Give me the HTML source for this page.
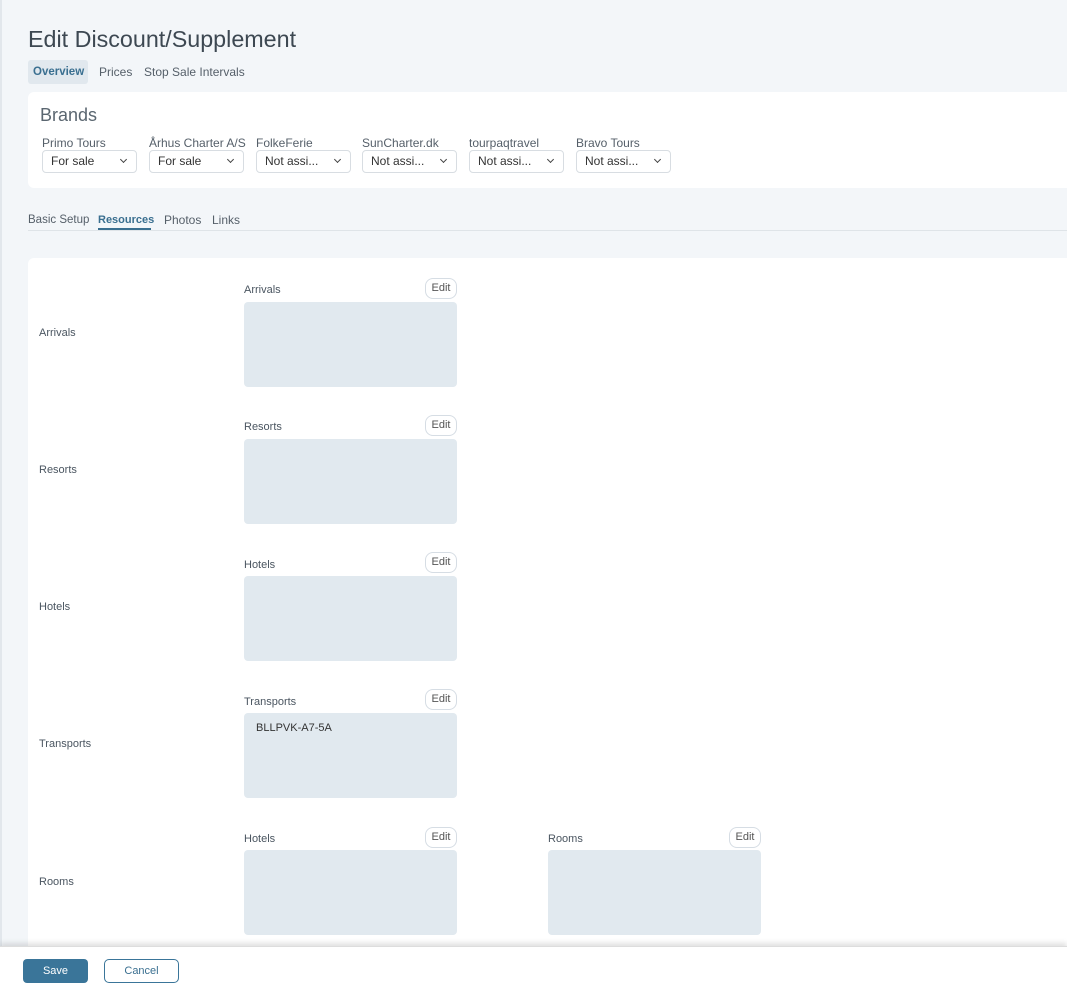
<!DOCTYPE html>
<html><head><meta charset="utf-8"><style>
*{box-sizing:border-box;margin:0;padding:0}
body{width:1067px;height:984px;overflow:hidden;background:#f3f6f9;font-family:"Liberation Sans",sans-serif;color:#4a5560;position:relative}
.a{position:absolute}
h1{position:absolute;left:28px;top:26px;font-size:23.3px;font-weight:400;color:#3d4852}
.tab{position:absolute;top:61px;height:23px;line-height:23px;font-size:12px;color:#555f69}
.card{position:absolute;background:#fff;border-radius:6px}
.bl{position:absolute;top:136px;font-size:12px;color:#555f69}
.sel{position:absolute;top:150px;width:95px;height:23px;border:1px solid #d8dde2;border-radius:4px;font-size:12px;line-height:21px;padding-left:8px;color:#333;background:#fff}
.sel:after{content:"";position:absolute;right:10px;top:6px;width:4px;height:4px;border-right:1.5px solid #444;border-bottom:1.5px solid #444;transform:rotate(45deg)}
.st{position:absolute;top:212px;height:16px;line-height:16px;font-size:12px;color:#555f69}
.lab{position:absolute;left:39px;font-size:11px;color:#4a5560}
.fl{position:absolute;font-size:11px;color:#4a5560}
.edit{position:absolute;width:32px;height:21px;border:1px solid #d6dde4;border-radius:8px;font-size:11px;line-height:19px;text-align:center;color:#555;background:#fff}
.box{position:absolute;width:213px;height:85px;background:#e1e9ef;border-radius:4px}
</style></head><body>
<div class="a" style="left:0;top:0;width:2px;height:984px;background:#e2e7ec"></div>
<h1>Edit Discount/Supplement</h1>
<div class="a" style="left:28px;top:60px;width:60px;height:24px;background:#e1e8ee;border-radius:3px"></div>
<div class="tab" style="left:33px;font-weight:700;color:#3a6f90;font-size:11.5px">Overview</div>
<div class="tab" style="left:99px">Prices</div>
<div class="tab" style="left:144px">Stop Sale Intervals</div>
<div class="card" style="left:28px;top:92px;width:1050px;height:96px"></div>
<div class="a" style="left:40px;top:105px;font-size:18px;color:#5a6670">Brands</div>
<div class="bl" style="left:42px">Primo Tours</div><div class="sel" style="left:42px">For sale</div>
<div class="bl" style="left:149px">Århus Charter A/S</div><div class="sel" style="left:149px">For sale</div>
<div class="bl" style="left:256px">FolkeFerie</div><div class="sel" style="left:256px">Not assi...</div>
<div class="bl" style="left:362px">SunCharter.dk</div><div class="sel" style="left:362px">Not assi...</div>
<div class="bl" style="left:469px">tourpaqtravel</div><div class="sel" style="left:469px">Not assi...</div>
<div class="bl" style="left:576px">Bravo Tours</div><div class="sel" style="left:576px">Not assi...</div>
<div class="st" style="left:28px;font-size:11.5px">Basic Setup</div>
<div class="st" style="left:98px;font-weight:700;color:#3a6f90;font-size:11px">Resources</div>
<div class="a" style="left:98px;top:228px;width:53px;height:2px;background:#3a6f90"></div>
<div class="st" style="left:164px">Photos</div>
<div class="st" style="left:212px">Links</div>
<div class="a" style="left:28px;top:230px;width:1040px;height:1px;background:#dfe4e8"></div>
<div class="card" style="left:28px;top:258px;width:1050px;height:700px"></div>

<div class="lab" style="top:327px">Arrivals</div>
<div class="fl" style="left:244px;top:284px">Arrivals</div><div class="edit" style="left:425px;top:278px">Edit</div><div class="box" style="left:244px;top:302px"></div>

<div class="lab" style="top:464px">Resorts</div>
<div class="fl" style="left:244px;top:421px">Resorts</div><div class="edit" style="left:425px;top:415px">Edit</div><div class="box" style="left:244px;top:439px"></div>

<div class="lab" style="top:601px">Hotels</div>
<div class="fl" style="left:244px;top:559px">Hotels</div><div class="edit" style="left:425px;top:552px">Edit</div><div class="box" style="left:244px;top:576px"></div>

<div class="lab" style="top:738px">Transports</div>
<div class="fl" style="left:244px;top:696px">Transports</div><div class="edit" style="left:425px;top:689px">Edit</div><div class="box" style="left:244px;top:713px"><div style="position:absolute;left:12px;top:9px;font-size:11px;color:#333">BLLPVK-A7-5A</div></div>

<div class="lab" style="top:876px">Rooms</div>
<div class="fl" style="left:244px;top:833px">Hotels</div><div class="edit" style="left:425px;top:827px">Edit</div><div class="box" style="left:244px;top:850px"></div>
<div class="fl" style="left:548px;top:833px">Rooms</div><div class="edit" style="left:729px;top:827px">Edit</div><div class="box" style="left:548px;top:850px"></div>

<div class="a" style="left:0;top:946px;width:1067px;height:38px;background:#fff;box-shadow:0 -3px 5px rgba(0,0,0,0.12);border-top:1px solid #ddd"></div>
<div class="a" style="left:23px;top:959px;width:65px;height:24px;background:#3a7599;border-radius:4px;color:#fff;font-size:11px;line-height:24px;text-align:center">Save</div>
<div class="a" style="left:104px;top:959px;width:75px;height:24px;border:1px solid #3a7599;border-radius:5px;color:#3a6f90;font-size:11px;line-height:22px;text-align:center;background:#fff">Cancel</div>
</body></html>
